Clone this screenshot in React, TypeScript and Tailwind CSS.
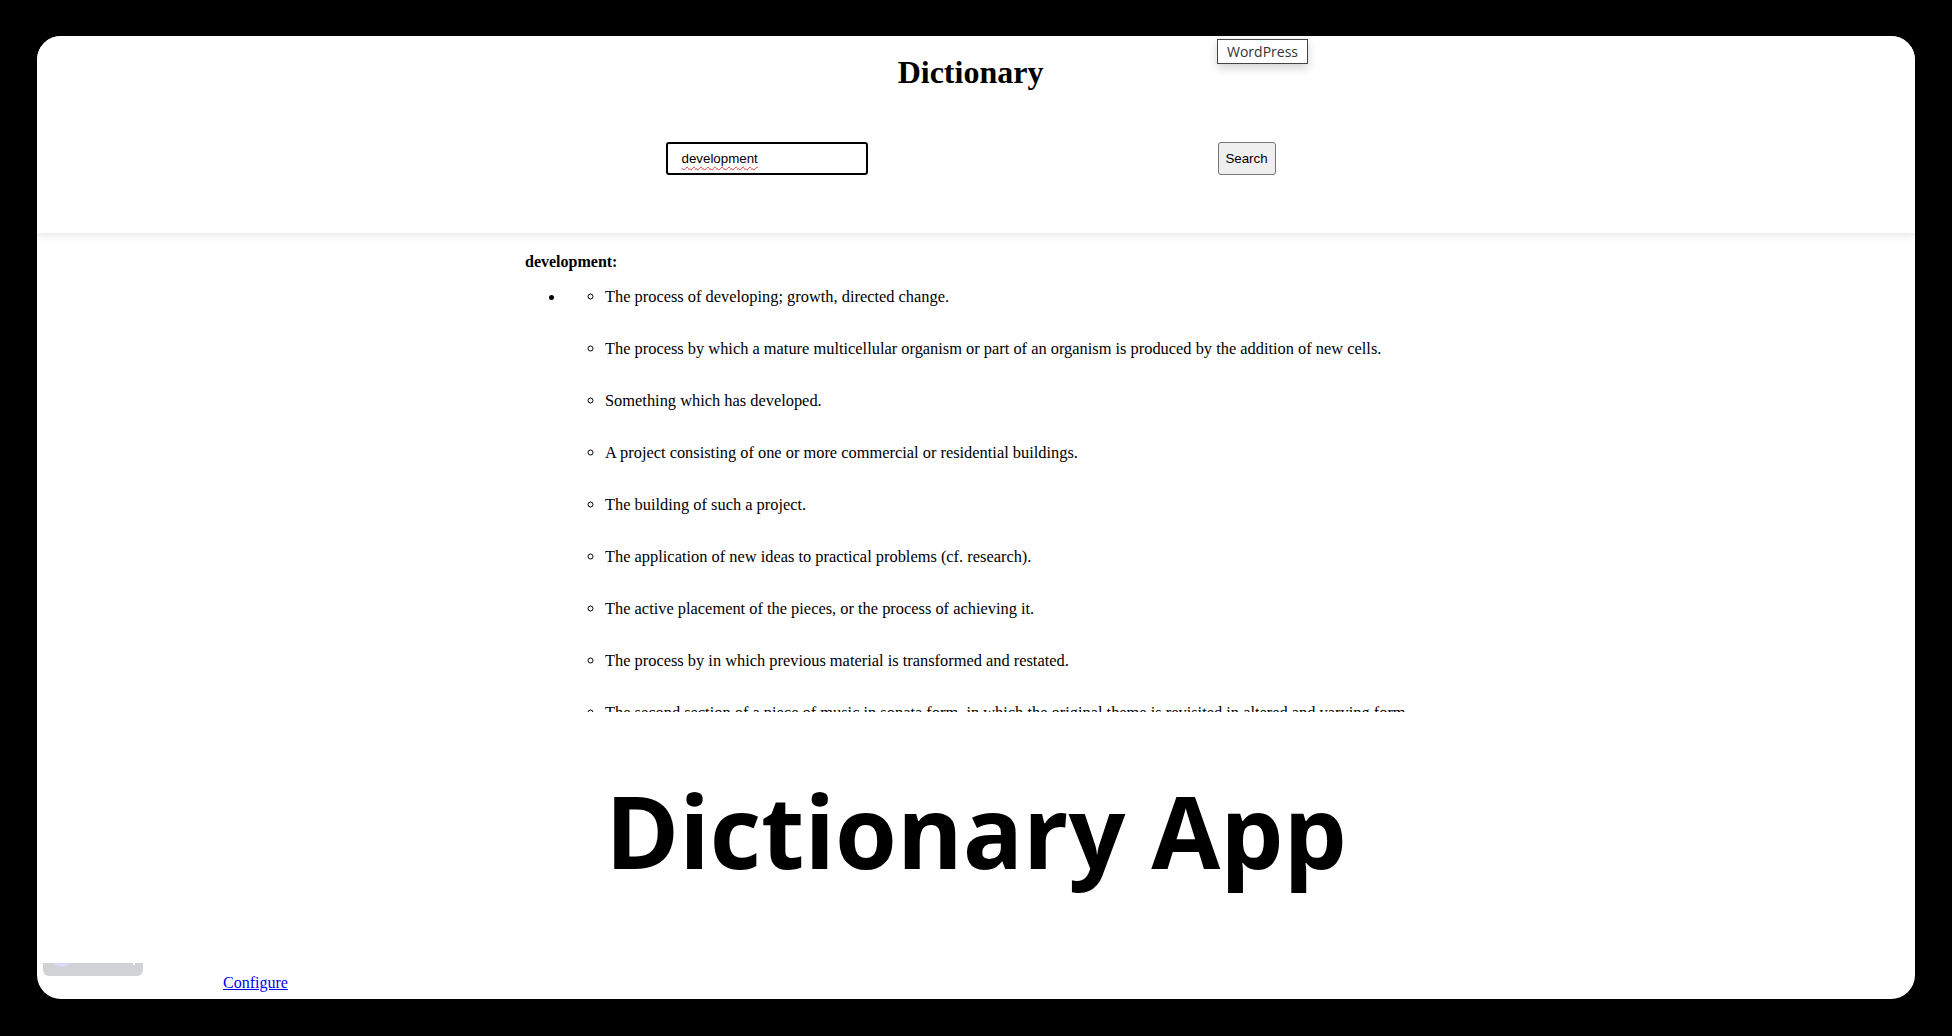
const definitions = [
  "The process of developing; growth, directed change.",
  "The process by which a mature multicellular organism or part of an organism is produced by the addition of new cells.",
  "Something which has developed.",
  "A project consisting of one or more commercial or residential buildings.",
  "The building of such a project.",
  "The application of new ideas to practical problems (cf. research).",
  "The active placement of the pieces, or the process of achieving it.",
  "The process by in which previous material is transformed and restated.",
  "The second section of a piece of music in sonata form, in which the original theme is revisited in altered and varying form.",
  "The process of treating photographic paper or film with chemicals to make the image appear.",
];

const App = () => {
  return (
    <div className="w-full h-[1036px] bg-black px-[37px] pt-[36px] overflow-hidden">
      <div className="relative h-[963px] bg-white rounded-[24px] flex flex-col overflow-hidden font-['Liberation_Serif',serif] text-black">
        {/* Header */}
        <header className="relative z-10 h-[197px] shrink-0 bg-white pt-[18px] pr-[11px] shadow-[0_2px_8px_rgba(0,0,0,0.1)]">
          <h1 className="text-center text-[32px] leading-[36px] font-bold">Dictionary</h1>
          <form className="mx-auto mt-[52px] w-[610px] flex justify-between items-center" onSubmit={(e) => e.preventDefault()}>
            <div className="w-[202px] h-[33px] border-2 border-black rounded-[3px] flex items-center pl-[14px] font-['Liberation_Sans',sans-serif] text-[13.33px]">
              <span className="underline decoration-wavy decoration-[#d33] decoration-1 underline-offset-[3px]">development</span>
            </div>
            <button
              type="submit"
              className="w-[58px] h-[33px] bg-[#efefef] border border-[#767676] rounded-[3px] font-['Liberation_Sans',sans-serif] text-[13.33px] flex items-center justify-center"
            >
              Search
            </button>
          </form>
        </header>

        {/* WordPress badge */}
        <div className="absolute z-20 left-[1180px] top-[3px] w-[91px] h-[25px] bg-white border border-[#444] flex items-center justify-center font-['Open_Sans',sans-serif] text-[14px] text-[#333] shadow-[0_4px_10px_rgba(0,0,0,0.18)]">
          WordPress
        </div>

        {/* Definitions */}
        <div className="h-[479px] shrink-0 overflow-hidden pt-[20px]">
          <div className="w-[902px] mx-auto text-[16px]">
            <p className="font-bold leading-[18px] mb-[14px]">development:</p>
            <ul className="list-disc pl-10">
              <li>
                <ul className="list-[circle] pl-10 text-[16.4px]">
                  {definitions.map((d, i) => (
                    <li key={i} className="leading-[18px] mb-[34px]">
                      {d}
                    </li>
                  ))}
                </ul>
              </li>
            </ul>
          </div>
        </div>

        {/* Big title */}
        <div className="mt-[68px] text-center font-['Open_Sans',sans-serif] font-bold text-[100px] leading-none">
          Dictionary App
        </div>

        {/* Bottom row */}
        <div className="mt-[83px] flex items-start">
          <div className="relative ml-[6px] w-[100px] h-[13px] bg-[#d1d2d6] rounded-b-[6px] overflow-hidden">
            <div className="absolute left-[9px] top-[-16px] w-[20px] h-[20px] rounded-full bg-[#d7d9fb]" />
            <div className="absolute left-[90px] top-0 w-[2px] h-[2px] bg-white" />
          </div>
          <a href="#" className="ml-[80px] mt-[11px] leading-[18px] text-[16px] text-[#0000ee] underline">
            Configure
          </a>
        </div>
      </div>
    </div>
  );
};

export default App;
